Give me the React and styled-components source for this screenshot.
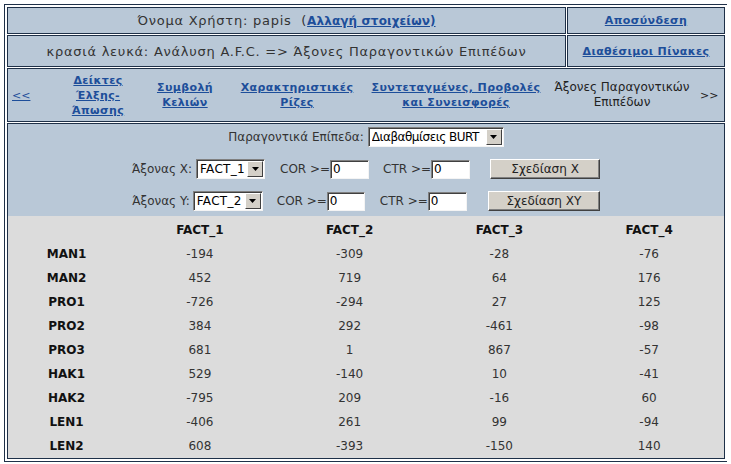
import React from "react";
import styled, { createGlobalStyle } from "styled-components";

const GlobalStyle = createGlobalStyle`
  body {
    margin: 4px;
    background: #ffffff;
    font-family: "DejaVu Sans", Verdana, sans-serif;
  }
`;

const Frame = styled.div`
  width: 718px;
  border: 1px solid #1e3048;
  padding: 2px;
  display: grid;
  grid-template-columns: 559px 158px;
  gap: 1px;
  background: #ffffff;
`;

const Cell = styled.div`
  grid-column: ${(p) => (p.$span ? "1 / span 2" : "auto")};
  height: ${(p) => p.$h}px;
  box-sizing: border-box;
  border: 1px solid #1e3048;
  background: #b9c8d7;
  display: flex;
  align-items: center;
  justify-content: center;
  color: #333333;
  font-size: 13px;
`;

const HeaderText = styled.span`
  letter-spacing: 0.75px;
  white-space: nowrap;
`;

const MainCell = styled.div`
  grid-column: 1 / span 2;
  height: 336px;
  box-sizing: border-box;
  border: 1px solid #1e3048;
  background: #dcdcdc;
  display: flex;
  flex-direction: column;
`;

const Link = styled.a`
  color: #1d4e9a;
  font-weight: bold;
  font-size: ${(p) => p.$size || 11}px;
  letter-spacing: ${(p) => (p.$ls !== undefined ? p.$ls : 0.4)}px;
  text-decoration: underline;
  cursor: pointer;
`;

const Nav = styled.div`
  display: flex;
  align-items: center;
  width: 100%;
  height: 100%;
`;

const NavItem = styled.div`
  margin-left: ${(p) => p.$ml}px;
  width: ${(p) => p.$w}px;
  text-align: ${(p) => p.$align || "center"};
  line-height: 15px;
  font-size: 12px;
  color: #222222;
`;

const Arrow = styled.a`
  font-size: 11px;
  color: ${(p) => (p.$link ? "#1d4e9a" : "#222222")};
  text-decoration: ${(p) => (p.$link ? "underline" : "none")};
`;

const Form = styled.div`
  background: #b9c8d7;
  display: flex;
  flex-direction: column;
  align-items: center;
  gap: 12px;
  padding: 3px 0 5px;
  height: 92px;
  box-sizing: border-box;
`;

const FormRow = styled.div`
  display: flex;
  align-items: center;
  height: 20px;
  font-size: 12px;
  color: #333333;
`;

const Label = styled.span`
  margin-left: ${(p) => p.$ml || 0}px;
  margin-right: ${(p) => p.$mr || 0}px;
  white-space: nowrap;
`;

const SelectBox = styled.div`
  width: ${(p) => p.$w}px;
  height: 20px;
  box-sizing: border-box;
  display: flex;
  align-items: center;
  background: #ffffff;
  border-top: 1px solid #808080;
  border-left: 1px solid #808080;
  border-bottom: 1px solid #f4f4f4;
  border-right: 1px solid #f4f4f4;
  box-shadow: inset 1px 1px 0 #404040;
  padding: 1px 1px 1px 3px;
  color: #000000;
  font-size: 12px;
`;

const SelectText = styled.span`
  flex: 1;
  white-space: nowrap;
  overflow: hidden;
  letter-spacing: ${(p) => (p.$tight ? "-0.5px" : "0.3px")};
`;

const SelectButton = styled.span`
  width: 16px;
  height: 16px;
  flex: none;
  box-sizing: border-box;
  background: #d4d0c8;
  border-top: 1px solid #ffffff;
  border-left: 1px solid #ffffff;
  border-bottom: 1px solid #404040;
  border-right: 1px solid #404040;
  display: flex;
  align-items: center;
  justify-content: center;
`;

const Input = styled.input`
  width: ${(p) => p.$w}px;
  height: 19px;
  box-sizing: border-box;
  border-top: 1px solid #808080;
  border-left: 1px solid #808080;
  border-bottom: 1px solid #f4f4f4;
  border-right: 1px solid #f4f4f4;
  box-shadow: inset 1px 1px 0 #404040;
  padding: 1px 2px;
  font-family: "DejaVu Sans", sans-serif;
  font-size: 12px;
  color: #000000;
  outline: none;
`;

const Button = styled.button`
  margin-left: ${(p) => p.$ml}px;
  width: ${(p) => p.$w}px;
  height: 20px;
  background: #d4d0c8;
  border-top: 1px solid #ffffff;
  border-left: 1px solid #ffffff;
  border-bottom: 1px solid #404040;
  border-right: 1px solid #404040;
  box-shadow: inset -1px -1px 0 #808080;
  font-family: "DejaVu Sans", sans-serif;
  font-size: 12px;
  color: #222222;
  padding: 0;
`;

const DataGrid = styled.div`
  display: grid;
  grid-template-columns: 117px repeat(4, 1fr);
  grid-auto-rows: 24px;
  padding-top: 2px;
  align-items: center;
  font-size: 12px;
`;

const Head = styled.div`
  text-align: center;
  font-weight: bold;
  color: #111111;
`;

const Value = styled.div`
  text-align: center;
  color: #333333;
`;

const DownTriangle = () => (
  <svg width="7" height="4" viewBox="0 0 7 4">
    <polygon points="0,0 7,0 3.5,4" fill="#000" />
  </svg>
);

const Select = ({ w, value, tight }) => (
  <SelectBox $w={w}>
    <SelectText $tight={tight}>{value}</SelectText>
    <SelectButton>
      <DownTriangle />
    </SelectButton>
  </SelectBox>
);

const rows = [
  ["MAN1", -194, -309, -28, -76],
  ["MAN2", 452, 719, 64, 176],
  ["PRO1", -726, -294, 27, 125],
  ["PRO2", 384, 292, -461, -98],
  ["PRO3", 681, 1, 867, -57],
  ["HAK1", 529, -140, 10, -41],
  ["HAK2", -795, 209, -16, 60],
  ["LEN1", -406, 261, 99, -94],
  ["LEN2", 608, -393, -150, 140],
];

export default function App() {
  return (
    <>
      <GlobalStyle />
      <Frame>
        <Cell $h={27}>
          <HeaderText>
            Όνομα Χρήστη: papis&nbsp;&nbsp;(
            <Link $size={12} $ls={0.1}>
              Αλλαγή στοιχείων)
            </Link>
          </HeaderText>
        </Cell>
        <Cell $h={27}>
          <Link $size={11}>Αποσύνδεση</Link>
        </Cell>
        <Cell $h={32}>
          <HeaderText>κρασιά λευκά: Ανάλυση A.F.C. =&gt; Άξονες Παραγοντικών Επιπέδων</HeaderText>
        </Cell>
        <Cell $h={32}>
          <Link>Διαθέσιμοι Πίνακες</Link>
        </Cell>
        <Cell $span $h={54}>
          <Nav>
            <NavItem $ml={4} $w={24} $align="left">
              <Arrow $link>&lt;&lt;</Arrow>
            </NavItem>
            <NavItem $ml={32} $w={60}>
              <Link>
                Δείκτες
                <br />
                Έλξης-
                <br />
                Άπωσης
              </Link>
            </NavItem>
            <NavItem $ml={22} $w={70}>
              <Link>
                Συμβολή
                <br />
                Κελιών
              </Link>
            </NavItem>
            <NavItem $ml={17} $w={120}>
              <Link>
                Χαρακτηριστικές
                <br />
                Ρίζες
              </Link>
            </NavItem>
            <NavItem $ml={11} $w={176}>
              <Link>
                Συντεταγμένες, Προβολές
                <br />
                και Συνεισφορές
              </Link>
            </NavItem>
            <NavItem $ml={3} $w={150}>
              Άξονες Παραγοντικών
              <br />
              Επιπέδων
            </NavItem>
            <NavItem $ml={3} $w={20} $align="left">
              <Arrow>&gt;&gt;</Arrow>
            </NavItem>
          </Nav>
        </Cell>
        <MainCell>
          <Form>
            <FormRow>
              <Label $mr={4}>Παραγοντικά Επίπεδα:</Label>
              <Select w={136} value="Διαβαθμίσεις BURT" tight />
            </FormRow>
            <FormRow>
              <Label $mr={4}>Άξονας X:</Label>
              <Select w={69} value="FACT_1" />
              <Label $ml={15}>COR &gt;=</Label>
              <Input $w={39} defaultValue="0" />
              <Label $ml={14}>CTR &gt;=</Label>
              <Input $w={39} defaultValue="0" />
              <Button $ml={20} $w={110}>Σχεδίαση X</Button>
            </FormRow>
            <FormRow>
              <Label $mr={3}>Άξονας Y:</Label>
              <Select w={70} value="FACT_2" />
              <Label $ml={14}>COR &gt;=</Label>
              <Input $w={38} defaultValue="0" />
              <Label $ml={15}>CTR &gt;=</Label>
              <Input $w={39} defaultValue="0" />
              <Button $ml={21} $w={112}>Σχεδίαση XY</Button>
            </FormRow>
          </Form>
          <DataGrid>
            <Head />
            <Head>FACT_1</Head>
            <Head>FACT_2</Head>
            <Head>FACT_3</Head>
            <Head>FACT_4</Head>
            {rows.map((r) => (
              <React.Fragment key={r[0]}>
                <Head>{r[0]}</Head>
                {r.slice(1).map((v, i) => (
                  <Value key={i}>{v}</Value>
                ))}
              </React.Fragment>
            ))}
          </DataGrid>
        </MainCell>
      </Frame>
    </>
  );
}
